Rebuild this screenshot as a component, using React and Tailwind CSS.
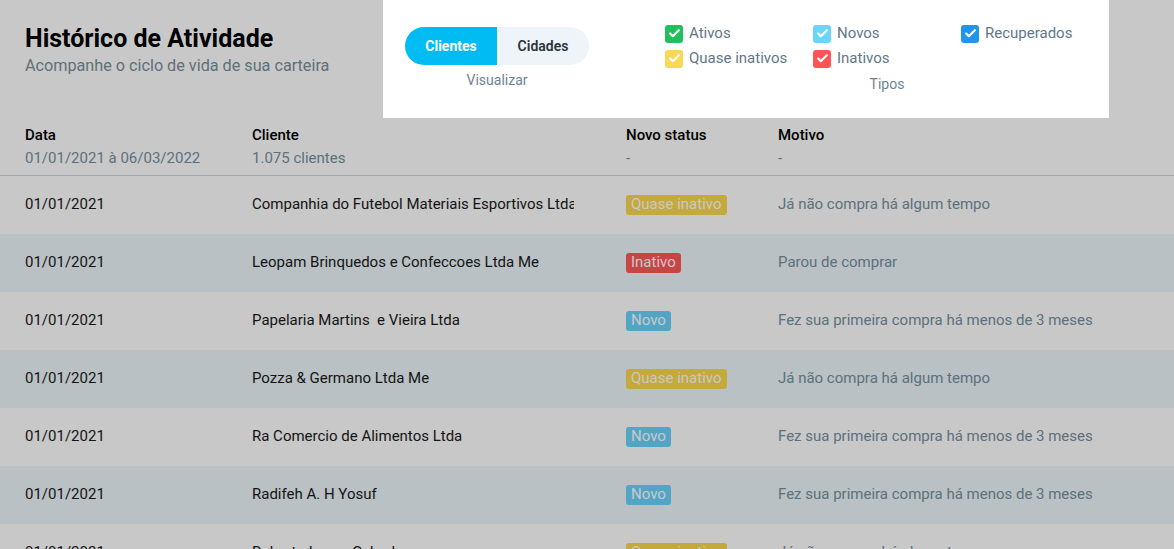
import React from 'react';
import { Check } from 'lucide-react';

const ROWS = [
  { date: '01/01/2021', client: 'Companhia do Futebol Materiais Esportivos Ltda', status: 'quase', reason: 'Já não compra há algum tempo' },
  { date: '01/01/2021', client: 'Leopam Brinquedos e Confeccoes Ltda Me', status: 'inativo', reason: 'Parou de comprar' },
  { date: '01/01/2021', client: 'Papelaria Martins  e Vieira Ltda', status: 'novo', reason: 'Fez sua primeira compra há menos de 3 meses' },
  { date: '01/01/2021', client: 'Pozza & Germano Ltda Me', status: 'quase', reason: 'Já não compra há algum tempo' },
  { date: '01/01/2021', client: 'Ra Comercio de Alimentos Ltda', status: 'novo', reason: 'Fez sua primeira compra há menos de 3 meses' },
  { date: '01/01/2021', client: 'Radifeh A. H Yosuf', status: 'novo', reason: 'Fez sua primeira compra há menos de 3 meses' },
  { date: '01/01/2021', client: 'Roberto Lucas Cabral', status: 'quase', reason: 'Já não compra há algum tempo' },
];

const STATUS = {
  quase: { label: 'Quase inativo', cls: 'bg-[#fad84d]' },
  inativo: { label: 'Inativo', cls: 'bg-[#ff5858]' },
  novo: { label: 'Novo', cls: 'bg-[#6ad3fd]' },
};

const TYPES = [
  { label: 'Ativos', cls: 'bg-[#21c05c]' },
  { label: 'Novos', cls: 'bg-[#6dd4f9]' },
  { label: 'Recuperados', cls: 'bg-[#2196e8]' },
  { label: 'Quase inativos', cls: 'bg-[#f7d955]' },
  { label: 'Inativos', cls: 'bg-[#ff5454]' },
];

const Badge = ({ status }) => {
  const s = STATUS[status];
  return (
    <span className={`inline-flex h-[20px] items-center rounded-[3px] px-[5px] text-[15px] leading-none text-white ${s.cls}`}>
      {s.label}
    </span>
  );
};

const TypeCheck = ({ label, cls }) => (
  <label className="flex h-[25px] items-center gap-[6px]">
    <span className={`flex h-[18px] w-[18px] items-center justify-center rounded-[3px] ${cls}`}>
      <Check size={13} strokeWidth={4} className="text-white" />
    </span>
    <span className="text-[15px] text-[#617888]">{label}</span>
  </label>
);

const FilterPanel = () => (
  <div className="absolute left-[383px] top-0 z-20 flex h-[118px] w-[726px] bg-white">
    <div className="flex flex-col items-center pl-[22px] pt-[27px]">
      <div className="flex h-[38px] overflow-hidden rounded-full">
        <button className="w-[92px] bg-[#00bcf2] text-[14px] font-bold text-white">Clientes</button>
        <button className="w-[92px] bg-[#eef5fa] text-[14px] font-semibold text-[#2c3338]">Cidades</button>
      </div>
      <span className="mt-[6px] text-[14px] leading-[18px] text-[#6e8493]">Visualizar</span>
    </div>
    <div className="ml-[76px] flex w-[444px] flex-col pt-[21px]">
      <div className="grid grid-cols-3">
        {TYPES.map((t) => <TypeCheck key={t.label} {...t} />)}
      </div>
      <span className="mt-[4px] text-center text-[14px] leading-[18px] text-[#6e8493]">Tipos</span>
    </div>
  </div>
);

export default function App() {
  return (
    <div className="relative h-[549px] w-[1174px] overflow-hidden bg-white" style={{ fontFamily: 'Roboto, "Noto Sans", sans-serif' }}>
      <div className="px-[25px] pt-[25px]">
        <h1 className="text-[25px] font-bold leading-[28px] text-black">Histórico de Atividade</h1>
        <p className="mt-[3px] text-[16.2px] leading-[20px] text-[#7690a0]">Acompanhe o ciclo de vida de sua carteira</p>
      </div>

      <div className="mt-[50px] grid grid-cols-[252px_374px_152px_1fr] border-b border-[#c8d8e0] pb-[8px] text-[15px] leading-[18px]">
        <div className="pl-[25px]">
          <div className="font-medium text-black">Data</div>
          <div className="mt-[5px] text-[#7690a0]">01/01/2021 à 06/03/2022</div>
        </div>
        <div>
          <div className="font-medium text-black">Cliente</div>
          <div className="mt-[5px] text-[#7690a0]">1.075 clientes</div>
        </div>
        <div>
          <div className="font-medium text-black">Novo status</div>
          <div className="mt-[5px] text-[#7690a0]">-</div>
        </div>
        <div>
          <div className="font-medium text-black">Motivo</div>
          <div className="mt-[5px] text-[#7690a0]">-</div>
        </div>
      </div>

      {ROWS.map((r, i) => (
        <div key={i} className={`grid h-[58px] grid-cols-[252px_374px_152px_1fr] items-center pb-[1px] text-[15px] ${i % 2 === 1 ? 'bg-[#ecf6fa]' : ''}`}>
          <div className="pl-[25px] text-[#1a1a1a]">{r.date}</div>
          <div className="w-[322px] overflow-hidden whitespace-pre text-[#1a1a1a]">{r.client}</div>
          <div><Badge status={r.status} /></div>
          <div className="text-[#7690a0]">{r.reason}</div>
        </div>
      ))}

      <div className="absolute inset-0 z-10 bg-black/[0.216]" />
      <FilterPanel />
    </div>
  );
}
